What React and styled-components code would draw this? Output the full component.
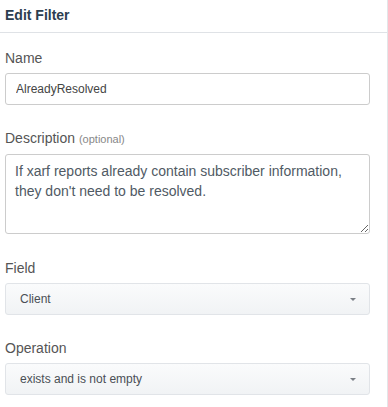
import React from "react";
import styled, { createGlobalStyle } from "styled-components";

const Global = createGlobalStyle`
  html, body { margin: 0; padding: 0; background: #fff; }
  body { font-family: "Liberation Sans", Arial, sans-serif; }
  * { box-sizing: border-box; }
`;

const Panel = styled.div`
  width: 388px;
  height: 407px;
  border-right: 1px solid #e3e5e8;
  background: #fff;
`;

const Header = styled.div`
  height: 33px;
  padding: 5px 5px 0;
  border-bottom: 1px solid #dfe2e6;
  font-size: 14px;
  line-height: 20px;
  font-weight: bold;
  color: #2c3e50;
`;

const Body = styled.div`
  padding: 15px 17px 0 5px;
  display: flex;
  flex-direction: column;
`;

const Group = styled.div`
  display: flex;
  flex-direction: column;
  margin-bottom: ${(p) => p.$gap || 23}px;
`;

const Label = styled.label`
  font-size: 14px;
  line-height: 20px;
  color: #555;
  margin-bottom: 5px;
`;

const Hint = styled.span`
  font-size: 11px;
  color: #888;
`;

const Input = styled.input`
  height: 32px;
  width: 100%;
  border: 1px solid #ccc;
  border-radius: 3px;
  padding: 0 10px;
  font-family: inherit;
  font-size: 12px;
  color: #444;
  background: #fff;
  outline: none;
`;

const TextArea = styled.textarea`
  display: block;
  height: 80px;
  width: 100%;
  border: 1px solid #ccc;
  border-radius: 3px;
  padding: 6px 9px;
  font-family: inherit;
  font-size: 14px;
  line-height: 20px;
  color: #505a64;
  outline: none;
`;

const Select = styled.div`
  height: 32px;
  width: 100%;
  border: 1px solid #e1e4e8;
  border-radius: 3px;
  padding: 0 13px 0 14px;
  display: flex;
  align-items: center;
  justify-content: space-between;
  font-size: 12px;
  color: #4a4f55;
  background: linear-gradient(#fafbfc, #f1f3f5);
`;

const Caret = styled.span`
  width: 0;
  height: 0;
  border-left: 3px solid transparent;
  border-right: 3px solid transparent;
  border-top: 3px solid #7a7f85;
`;

export default function App() {
  return (
    <>
      <Global />
      <Panel>
        <Header>Edit Filter</Header>
        <Body>
          <Group>
            <Label>Name</Label>
            <Input defaultValue="AlreadyResolved" />
          </Group>
          <Group $gap={24}>
            <Label>
              Description <Hint>(optional)</Hint>
            </Label>
            <TextArea defaultValue={"If xarf reports already contain subscriber information, they don't need to be resolved."} />
          </Group>
          <Group>
            <Label>Field</Label>
            <Select>
              <span>Client</span>
              <Caret />
            </Select>
          </Group>
          <Group>
            <Label>Operation</Label>
            <Select>
              <span>exists and is not empty</span>
              <Caret />
            </Select>
          </Group>
        </Body>
      </Panel>
    </>
  );
}
